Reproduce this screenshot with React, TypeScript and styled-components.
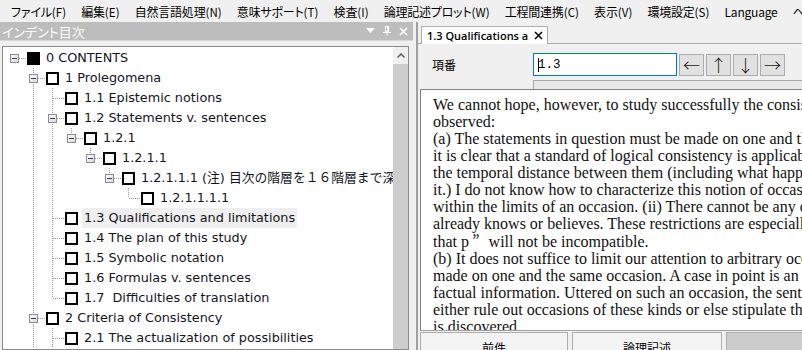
import React from 'react';
import styled, { createGlobalStyle } from 'styled-components';

const Global = createGlobalStyle`
  html, body { margin: 0; padding: 0; background: #f0f0f0; }
  body { width: 802px; height: 350px; overflow: hidden; font-family: "Noto Sans CJK JP", sans-serif; }
`;

const Frame = styled.div`
  width: 802px;
  height: 350px;
  display: flex;
  flex-direction: column;
  overflow: hidden;
  background: #f0f0f0;
`;

const MenuBar = styled.div`
  height: 22px;
  flex-shrink: 0;
  display: flex;
  align-items: center;
  padding-left: 2px;
  font-family: "Noto Sans CJK JP", sans-serif;
  font-feature-settings: "palt";
  font-size: 12px;
  color: #000;
  white-space: nowrap;
  background: #f0f0f0;
`;

const Grip = styled.div`
  width: 2px;
  height: 14px;
  margin-right: 9px;
  background-image: radial-gradient(circle, #9a9a9a 0.8px, transparent 1px);
  background-size: 2px 4px;
`;

const MenuItem = styled.span`
  margin-right: 15px;
  letter-spacing: -0.2px;
`;

const Acc = styled.span`
  font-size: 11.5px;
  letter-spacing: 0.1px;
`;

const Main = styled.div`
  flex: 1;
  display: flex;
  min-height: 0;
`;

const LeftPanel = styled.div`
  width: 413px;
  flex-shrink: 0;
  display: flex;
  flex-direction: column;
`;

const TitleBar = styled.div`
  height: 18px;
  flex-shrink: 0;
  background: #bdbdbd;
  color: #fafafa;
  display: flex;
  align-items: center;
  justify-content: space-between;
  padding-left: 2px;
  font-size: 13px;
  font-feature-settings: "palt";
  margin-bottom: 5px;
  border-bottom: 1px solid #d8d8d8;
`;

const TitleIcons = styled.div`
  display: flex;
  align-items: center;
  gap: 8px;
  padding-right: 5px;
`;

const TreeBox = styled.div`
  flex: 1;
  margin-left: 2px;
  margin-right: 4px;
  border: 1px solid #8a8a8a;
  background: #fff;
  display: flex;
  overflow: hidden;
  min-height: 0;
`;

const TreeList = styled.div`
  flex: 1;
  padding: 1px 0 0 2px;
  overflow: hidden;
  min-width: 0;
`;

const Row = styled.div`
  height: 20px;
  display: flex;
  align-items: center;
  white-space: nowrap;
`;

const Cell = styled.svg`
  flex-shrink: 0;
  display: block;
`;

const Check = styled.span<{ $filled?: boolean }>`
  width: 13px;
  height: 13px;
  box-sizing: border-box;
  border: 2px solid #000;
  background: ${p => (p.$filled ? '#000' : '#fff')};
  flex-shrink: 0;
  margin-right: 4px;
`;

const Label = styled.span<{ $selected?: boolean }>`
  font-family: "DejaVu Sans", "Noto Sans CJK JP", sans-serif;
  font-size: 12.8px;
  color: #14141e;
  line-height: 20px;
  height: 20px;
  padding: 0 2px;
  background: ${p => (p.$selected ? '#efefef' : 'transparent')};
`;

const ScrollBar = styled.div`
  width: 15px;
  flex-shrink: 0;
  background: #cdcdcd;
  display: flex;
  flex-direction: column;
`;

const ScrollArrow = styled.div`
  height: 17px;
  background: #f0f0f0;
  display: flex;
  align-items: center;
  justify-content: center;
`;

const Splitter = styled.div`
  width: 3px;
  flex-shrink: 0;
  border-right: 1px solid #a0a0a0;
`;

const RightPane = styled.div`
  flex: 1;
  min-width: 0;
  display: flex;
  flex-direction: column;
  border-left: 1px solid #a0a0a0;
`;

const TabStrip = styled.div`
  height: 21px;
  flex-shrink: 0;
  display: flex;
  align-items: flex-end;
  padding-left: 3px;
  border-bottom: 1px solid #acacac;
`;

const Tab = styled.div`
  height: 18px;
  box-sizing: border-box;
  width: 127px;
  background: #fff;
  border: 1px solid #acacac;
  border-bottom: none;
  margin-bottom: -1px;
  display: flex;
  align-items: center;
  padding-left: 5px;
  font-family: "Open Sans", sans-serif;
  font-weight: 600;
  font-size: 11px;
  color: #000;
  white-space: nowrap;
  overflow: hidden;
`;

const TabClose = styled.span`
  margin-left: auto;
  margin-right: 4px;
  display: flex;
`;

const Form = styled.div`
  display: grid;
  grid-template-columns: 101px 146px 1fr;
  grid-template-rows: 23px 9px;
  row-gap: 4px;
  padding: 9px 0 0 14px;
  flex-shrink: 0;
`;

const FieldLabel = styled.div`
  font-size: 12px;
  display: flex;
  align-items: center;
  color: #000;
`;

const Input = styled.div`
  width: 144px;
  height: 23px;
  box-sizing: border-box;
  border: 1px solid #0078d7;
  background: #fff;
  display: flex;
  align-items: center;
  padding-left: 4px;
  font-family: "Liberation Mono", monospace;
  font-size: 12.5px;
  color: #000;
`;

const Caret = styled.span`
  width: 1px;
  height: 14px;
  background: #000;
  margin-right: -1px;
`;

const ArrowGroup = styled.div`
  display: flex;
  gap: 2px;
  align-items: center;
`;

const ArrowButton = styled.div`
  width: 25px;
  height: 22px;
  box-sizing: border-box;
  border: 1px solid #adadad;
  background: #e1e1e1;
  display: flex;
  align-items: center;
  justify-content: center;
  font-family: "Noto Sans CJK JP", sans-serif;
  font-size: 17px;
  font-weight: 300;
  color: #1a1a1a;
`;

const Bar = styled.div`
  grid-column: 2 / -1;
  border-top: 1px solid #a8a8a8;
  border-left: 1px solid #a8a8a8;
  background: #e8e8e8;
`;

const TextBox = styled.div`
  flex: 1;
  min-height: 0;
  margin-left: 2px;
  border-top: 1px solid #828282;
  border-left: 1px solid #828282;
  border-bottom: 1px solid #a0a0a0;
  background: #fff;
  padding: 6px 0 0 12px;
  overflow: hidden;
  font-family: "Liberation Serif", serif;
  font-size: 16px;
  line-height: 17px;
  color: #111;
`;

const Line = styled.div`
  white-space: nowrap;
`;

const Jp = styled.span`
  font-family: "Noto Sans CJK JP", sans-serif;
  margin-left: 3px;
  margin-right: 9px;
`;

const BottomBar = styled.div`
  height: 18px;
  flex-shrink: 0;
  display: flex;
  padding: 1px 0 0 2px;
  gap: 4px;
`;

const BottomButton = styled.div<{ $w: number; $pressed?: boolean }>`
  width: ${p => p.$w}px;
  height: 31px;
  flex-shrink: 0;
  box-sizing: border-box;
  border: 1px solid #adadad;
  background: ${p => (p.$pressed ? '#cccccc' : '#f3f3f3')};
  display: flex;
  align-items: center;
  justify-content: center;
  font-size: 12px;
  color: #000;
`;

type Node = {
  level: number;
  label: string;
  guides: boolean[];
  exp?: boolean;
  last?: boolean;
  root?: boolean;
  filled?: boolean;
  selected?: boolean;
};

const nodes: Node[] = [
  { level: 0, label: '0 CONTENTS', guides: [], exp: true, last: true, root: true, filled: true },
  { level: 1, label: '1 Prolegomena', guides: [false], exp: true },
  { level: 2, label: '1.1 Epistemic notions', guides: [false, true] },
  { level: 2, label: '1.2 Statements v. sentences', guides: [false, true], exp: true },
  { level: 3, label: '1.2.1', guides: [false, true, true], exp: true, last: true },
  { level: 4, label: '1.2.1.1', guides: [false, true, true, false], exp: true, last: true },
  {
    level: 5,
    label: '1.2.1.1.1 (注) 目次の階層を１６階層まで深めることができます',
    guides: [false, true, true, false, false],
    exp: true,
    last: true,
  },
  { level: 6, label: '1.2.1.1.1.1', guides: [false, true, true, false, false, false], last: true },
  { level: 2, label: '1.3 Qualifications and limitations', guides: [false, true], selected: true },
  { level: 2, label: '1.4 The plan of this study', guides: [false, true] },
  { level: 2, label: '1.5 Symbolic notation', guides: [false, true] },
  { level: 2, label: '1.6 Formulas v. sentences', guides: [false, true] },
  { level: 2, label: '1.7\u00a0 Difficulties of translation', guides: [false, true], last: true },
  { level: 1, label: '2 Criteria of Consistency', guides: [false], exp: true },
  { level: 2, label: '2.1 The actualization of possibilities', guides: [false, true] },
];

const DOT = '#9a9a9a';

const Guide: React.FC<{ on: boolean }> = ({ on }) => (
  <Cell width={19} height={20} viewBox="0 0 19 20">
    {on && <line x1={9.5} y1={0} x2={9.5} y2={20} stroke={DOT} strokeDasharray="1 1" />}
  </Cell>
);

const Connector: React.FC<{ node: Node }> = ({ node }) => (
  <Cell width={22} height={20} viewBox="0 0 22 20">
    {!node.root && (
      <line x1={9.5} y1={0} x2={9.5} y2={node.last ? 10 : 20} stroke={DOT} strokeDasharray="1 1" />
    )}
    <line x1={node.exp ? 14 : 10} y1={10.5} x2={22} y2={10.5} stroke={DOT} strokeDasharray="1 1" />
    {node.exp && (
      <g>
        <defs>
          <linearGradient id="expg" x1="0" y1="0" x2="1" y2="1">
            <stop offset="0" stopColor="#ffffff" />
            <stop offset="1" stopColor="#d6d6d6" />
          </linearGradient>
        </defs>
        <rect x={5.5} y={6.5} width={8} height={8} fill="url(#expg)" stroke="#8c8c8c" />
        <line x1={7} y1={10.5} x2={12} y2={10.5} stroke="#2f3f6f" />
      </g>
    )}
  </Cell>
);

const menus: [string, string][] = [
  ['ファイル', '(F)'],
  ['編集', '(E)'],
  ['自然言語処理', '(N)'],
  ['意味サポート', '(T)'],
  ['検査', '(I)'],
  ['論理記述プロット', '(W)'],
  ['工程間連携', '(C)'],
  ['表示', '(V)'],
  ['環境設定', '(S)'],
];

const lines: React.ReactNode[] = [
  'We cannot hope, however, to study successfully the consistency of statements unless two restrictions are',
  'observed:',
  '(a) The statements in question must be made on one and the same occasion. If they are made on different occasions,',
  'it is clear that a standard of logical consistency is applicable only if nothing relevant has happened during',
  'the temporal distance between them (including what happened to the speaker who made',
  'it.) I do not know how to characterize this notion of occasion precisely, except by saying that it must lie',
  'within the limits of an occasion. (ii) There cannot be any change in what the speaker',
  'already knows or believes. These restrictions are especially important when we claim',
  <>
    that p<Jp>”</Jp>will not be incompatible.
  </>,
  '(b) It does not suffice to limit our attention to arbitrary occasions on which statements are',
  'made on one and the same occasion. A case in point is an occasion on which we receive new',
  'factual information. Uttered on such an occasion, the sentences may well be inconsistent; we must',
  'either rule out occasions of these kinds or else stipulate that the information is fixed before inconsistency',
  'is discovered.',
];

export default function App() {
  return (
    <Frame>
      <Global />
      <MenuBar>
        <Grip />
        {menus.map(([t, a]) => (
          <MenuItem key={t}>
            {t}
            <Acc>{a}</Acc>
          </MenuItem>
        ))}
        <MenuItem>Language</MenuItem>
        <MenuItem>ヘルプ</MenuItem>
      </MenuBar>
      <Main>
        <LeftPanel>
          <TitleBar>
            <span>インデント目次</span>
            <TitleIcons>
              <svg width="9" height="6" viewBox="0 0 9 6">
                <path d="M0 0 H9 L4.5 5 Z" fill="#fff" />
              </svg>
              <svg width="8" height="10" viewBox="0 0 8 10">
                <path d="M2.5 0.5 H5.5 V5.5 H2.5 Z" fill="none" stroke="#fff" />
                <line x1="4.5" y1="1" x2="4.5" y2="5" stroke="#fff" />
                <line x1="0" y1="6.5" x2="8" y2="6.5" stroke="#fff" />
                <line x1="4" y1="7" x2="4" y2="10" stroke="#fff" strokeWidth="1" />
              </svg>
              <svg width="9" height="9" viewBox="0 0 9 9">
                <path d="M1 1 L8 8 M8 1 L1 8" stroke="#fff" strokeWidth="1.6" />
              </svg>
            </TitleIcons>
          </TitleBar>
          <TreeBox>
            <TreeList>
              {nodes.map((n, i) => (
                <Row key={i}>
                  {n.guides.map((g, k) => (
                    <Guide key={k} on={g} />
                  ))}
                  <Connector node={n} />
                  <Check $filled={n.filled} />
                  <Label $selected={n.selected}>{n.label}</Label>
                </Row>
              ))}
            </TreeList>
            <ScrollBar>
              <ScrollArrow>
                <svg width="8" height="5" viewBox="0 0 8 5">
                  <path d="M0.5 4.5 L4 1 L7.5 4.5" fill="none" stroke="#606060" strokeWidth="1.5" />
                </svg>
              </ScrollArrow>
            </ScrollBar>
          </TreeBox>
        </LeftPanel>
        <Splitter />
        <RightPane>
          <TabStrip>
            <Tab>
              1.3 Qualifications a
              <TabClose>
                <svg width="9" height="9" viewBox="0 0 9 9">
                  <path d="M1 1 L8 8 M8 1 L1 8" stroke="#000" strokeWidth="1.5" />
                </svg>
              </TabClose>
            </Tab>
          </TabStrip>
          <Form>
            <FieldLabel>項番</FieldLabel>
            <Input>
              <Caret />
              1.3
            </Input>
            <ArrowGroup>
              <ArrowButton>←</ArrowButton>
              <ArrowButton>↑</ArrowButton>
              <ArrowButton>↓</ArrowButton>
              <ArrowButton>→</ArrowButton>
            </ArrowGroup>
            <Bar />
          </Form>
          <TextBox>
            {lines.map((l, i) => (
              <Line key={i}>{l}</Line>
            ))}
          </TextBox>
          <BottomBar>
            <BottomButton $w={148}>前件</BottomButton>
            <BottomButton $w={150}>論理記述</BottomButton>
            <BottomButton $w={120} $pressed />
          </BottomBar>
        </RightPane>
      </Main>
    </Frame>
  );
}
